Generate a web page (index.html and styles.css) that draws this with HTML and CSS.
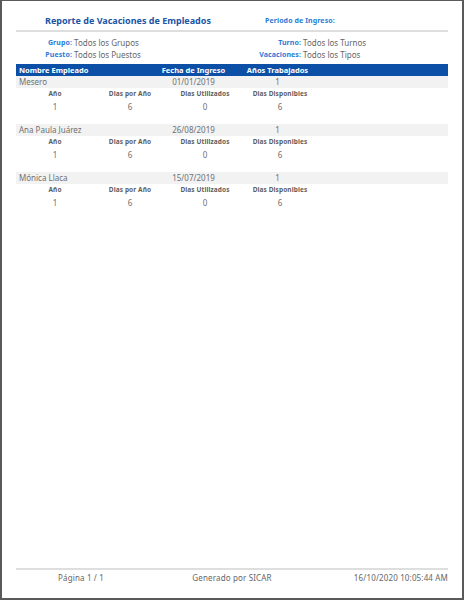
FILE: index.html
```html
<!DOCTYPE html>
<html lang="es">
<head>
<meta charset="utf-8">
<title>Reporte de Vacaciones de Empleados</title>
<link rel="stylesheet" href="styles.css">
</head>
<body>
<div class="page">
  <header class="head">
    <div class="title">Reporte de Vacaciones de Empleados</div>
    <div class="periodo">Periodo de Ingreso:</div>
  </header>
  <section class="filters">
    <span class="lbl">Grupo:</span><span class="val">Todos los Grupos</span>
    <span class="lbl">Turno:</span><span class="val">Todos los Turnos</span>
    <span class="lbl">Puesto:</span><span class="val">Todos los Puestos</span>
    <span class="lbl">Vacaciones:</span><span class="val">Todos los Tipos</span>
  </section>
  <div class="thead">
    <span class="c-name">Nombre Empleado</span>
    <span class="c-date">Fecha de Ingreso</span>
    <span class="c-years">Años Trabajados</span>
  </div>

  <div class="emp">
    <div class="emp-row">
      <span class="c-name">Mesero</span>
      <span class="c-date">01/01/2019</span>
      <span class="c-years">1</span>
    </div>
    <div class="sub sub-head"><span>Año</span><span>Dias por Año</span><span>Dias Utilizados</span><span>Dias Disponibles</span></div>
    <div class="sub sub-val"><span>1</span><span>6</span><span>0</span><span>6</span></div>
  </div>

  <div class="emp">
    <div class="emp-row">
      <span class="c-name">Ana Paula Juárez</span>
      <span class="c-date">26/08/2019</span>
      <span class="c-years">1</span>
    </div>
    <div class="sub sub-head"><span>Año</span><span>Dias por Año</span><span>Dias Utilizados</span><span>Dias Disponibles</span></div>
    <div class="sub sub-val"><span>1</span><span>6</span><span>0</span><span>6</span></div>
  </div>

  <div class="emp">
    <div class="emp-row">
      <span class="c-name">Mónica Llaca</span>
      <span class="c-date">15/07/2019</span>
      <span class="c-years">1</span>
    </div>
    <div class="sub sub-head"><span>Año</span><span>Dias por Año</span><span>Dias Utilizados</span><span>Dias Disponibles</span></div>
    <div class="sub sub-val"><span>1</span><span>6</span><span>0</span><span>6</span></div>
  </div>

  <footer class="foot">
    <span class="f-page">Página 1 / 1</span>
    <span class="f-gen">Generado por SICAR</span>
    <span class="f-date">16/10/2020 10:05:44 AM</span>
  </footer>
</div>
</body>
</html>
```

FILE: styles.css
```css
* { box-sizing: border-box; }
html, body { margin: 0; padding: 0; background: #fff; }
body { font-family: "Noto Sans", "DejaVu Sans", sans-serif; color: #666; font-size: 8px; }

.page {
  width: 464px;
  height: 600px;
  border-style: solid;
  border-color: #5a5a5a;
  border-width: 1px 2px 2px 2px;
  padding: 0 14px;
  display: flex;
  flex-direction: column;
}

.head {
  display: flex;
  align-items: center;
  height: 31px;
  padding-top: 10px;
  border-bottom: 2px solid #dedede;
}
.title {
  width: 249px;
  padding-left: 29px;
  font-size: 9px;
  font-weight: 700;
  color: #1a55a6;
  white-space: nowrap;
}
.periodo {
  font-size: 7px;
  font-weight: 700;
  color: #2b7bd8;
  letter-spacing: 0.1px;
}

.filters {
  display: grid;
  grid-template-columns: 56px 176px 53px 1fr;
  margin-top: 5px;
  line-height: 12px;
}
.lbl { text-align: right; color: #2b7bd8; font-weight: 700; font-size: 7px; letter-spacing: 0.1px; }
.val { padding-left: 2px; color: #666; }

.thead, .emp-row {
  display: grid;
  grid-template-columns: 135.5px 84px 84px 1fr;
  height: 12px;
  line-height: 12px;
}
.thead {
  margin-top: 3px;
  background: #0b4fa6;
  color: #fff;
  font-weight: 700;
  font-size: 7.5px;
}
.emp-row { background: #f2f2f2; color: #707070; }
.c-name { padding-left: 3px; }
.c-date, .c-years { text-align: center; }

.emp { margin-bottom: 11px; }
.sub {
  display: grid;
  grid-template-columns: 75px 75px 75px 75px;
  padding-left: 1.5px;
  text-align: center;
}
.sub-head { height: 12px; line-height: 12px; font-weight: 700; font-size: 6.5px; color: #5e5e5e; letter-spacing: 0.1px; }
.sub-val { height: 13px; line-height: 13px; color: #707070; }

.foot {
  margin-top: auto;
  margin-bottom: 13px;
  border-top: 2px solid #dedede;
  display: grid;
  grid-template-columns: 130px 172px 1fr;
  line-height: 14px;
  padding-top: 1px;
  letter-spacing: 0.15px;
}
.f-page { text-align: center; }
.f-gen { text-align: center; }
.f-date { text-align: right; }
```
